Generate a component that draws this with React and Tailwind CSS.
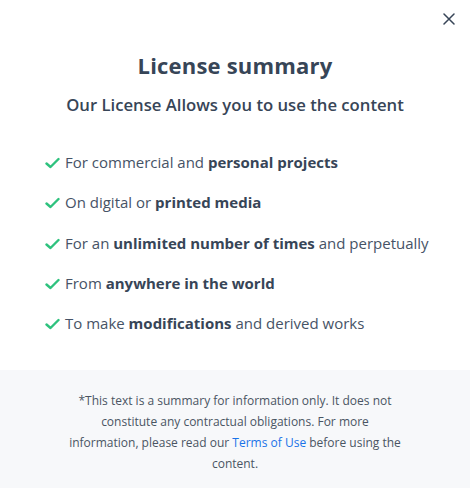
import React from 'react';

const items = [
  { pre: 'For commercial and ', bold: 'personal projects', post: '' },
  { pre: 'On digital or ', bold: 'printed media', post: '' },
  { pre: 'For an ', bold: 'unlimited number of times', post: ' and perpetually' },
  { pre: 'From ', bold: 'anywhere in the world', post: '' },
  { pre: 'To make ', bold: 'modifications', post: ' and derived works' },
];

function Check() {
  return (
    <svg width="15" height="12" viewBox="0 0 15 12" className="shrink-0 mt-[6px]">
      <path d="M1.5 6.5 L5.5 10 L13.5 2" fill="none" stroke="#2ec27e" strokeWidth="2.4" strokeLinecap="round" strokeLinejoin="round" />
    </svg>
  );
}

export default function App() {
  return (
    <div className="w-[470px] h-[488px] bg-white flex flex-col text-[#374557]" style={{ fontFamily: '"Open Sans", sans-serif' }}>
      {/* Header */}
      <div className="relative pt-[48px] flex flex-col items-center">
        <button className="absolute top-[9px] right-[11px] p-1 text-[#374557]">
          <svg width="12" height="12" viewBox="0 0 12 12">
            <path d="M1 1 L11 11 M11 1 L1 11" stroke="currentColor" strokeWidth="1.5" strokeLinecap="round" />
          </svg>
        </button>
        <h1 className="text-[22px] font-bold leading-[34px] tracking-[0.2px]">License summary</h1>
        <p className="mt-[11px] text-[16.7px] font-semibold leading-[24px]">Our License Allows you to use the content</p>
      </div>

      {/* List */}
      <ul className="mt-[34px] pl-[45px] flex flex-col gap-[18.3px]">
        {items.map((it, i) => (
          <li key={i} className="flex items-start gap-[5px] text-[15px] leading-[22px] text-[#465366]">
            <Check />
            <span>
              {it.pre}
              <strong className="font-bold text-[#374557]">{it.bold}</strong>
              {it.post}
            </span>
          </li>
        ))}
      </ul>

      {/* Footer */}
      <div className="mt-auto h-[118px] bg-[#f7f8fa] flex justify-center pt-[20px]">
        <p className="w-[340px] text-center text-[12px] leading-[21px] text-[#4a5563]">
          *This text is a summary for information only. It does not constitute any contractual obligations. For more information, please read our{' '}
          <a className="text-[#1a73e8]">Terms of Use</a> before using the content.
        </p>
      </div>
    </div>
  );
}
